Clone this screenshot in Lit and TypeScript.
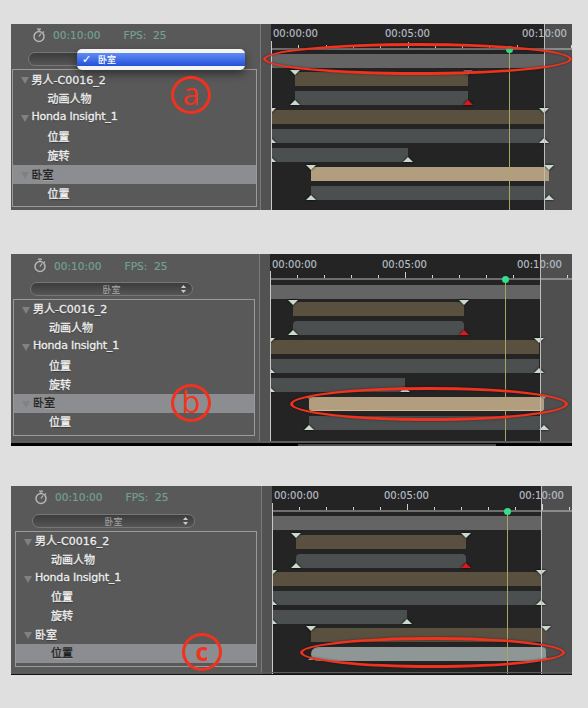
import { LitElement, html, css } from "lit";
import { customElement } from "lit/decorators.js";

type Row = [number, number];
interface Panel {
  height: number; gapBefore: number; sidebar: number; x0: number; treeLeft: number; treeW: number; treeH: number;
  treeTop: number; rowH: number; sel: number; headLeft: number; headH: number; popLeft: number; popW: number; popTop: number;
  rows: Row[]; play: number; end: number; tick: number; rowsTop: number; firstGap: number; gap: number;
  times: number[]; timeTop: number; rulerTop: number; selTrack: number; dimTrack: number; footer: string; round: boolean; menu: boolean;
  ellipse: number[]; circle: number[]; letter: string; letterClass: string;
}

const labels: [string, boolean][] = [
  ["男人-C0016_2", true], ["动画人物", false], ["Honda Insight_1", true], ["位置", false], ["旋转", false], ["卧室", true], ["位置", false],
];

const panels: Panel[] = [
  { height: 186, gapBefore: 24, sidebar: 249, x0: 260, treeLeft: 0.5, treeW: 245, treeH: 138, treeTop: 16, rowH: 19, sel: 5, headLeft: 21, headH: 22, popLeft: 17, popW: 160, popTop: 6,
    rows: [[0, 273], [24, 197], [24, 197], [0, 273], [0, 273], [0, 137], [40, 278], [40, 278]], play: 238, end: 273, tick: 27.3, rowsTop: 30, firstGap: 4, gap: 5,
    times: [2, 114, 251], timeTop: 4, rulerTop: 24, selTrack: 6, dimTrack: -1, footer: "", round: false, menu: true,
    ellipse: [252, 19, 309, 32], circle: [160, 52, 40, 38], letter: "a", letterClass: "thin" },
  { height: 192, gapBefore: 44, sidebar: 248, x0: 259, treeLeft: 2, treeW: 242, treeH: 137, treeTop: 16, rowH: 18.8, sel: 5, headLeft: 22, headH: 23, popLeft: 19, popW: 163, popTop: 6,
    rows: [[0, 270], [23, 194], [23, 194], [0, 269], [0, 269], [0, 135], [39, 274], [39, 274]], play: 235, end: 270, tick: 27, rowsTop: 31, firstGap: 3, gap: 5,
    times: [2, 112, 247], timeTop: 5, rulerTop: 24, selTrack: 6, dimTrack: 6, footer: "bf", round: true, menu: false,
    ellipse: [279, 133, 278, 34], circle: [160, 130, 40, 38], letter: "b", letterClass: "thin" },
  { height: 189, gapBefore: 40, sidebar: 250, x0: 261, treeLeft: 4, treeW: 242, treeH: 136, treeTop: 16, rowH: 18.7, sel: 6, headLeft: 23, headH: 22, popLeft: 21, popW: 163, popTop: 6,
    rows: [[0, 269], [24, 194], [24, 194], [0, 269], [0, 269], [0, 135], [39, 274], [39, 274]], play: 235, end: 269, tick: 27, rowsTop: 30, firstGap: 5, gap: 4.7,
    times: [2, 112, 247], timeTop: 4, rulerTop: 24, selTrack: 7, dimTrack: 7, footer: "cf", round: true, menu: false,
    ellipse: [289, 151, 265, 31], circle: [171, 147, 40, 38], letter: "c", letterClass: "heavy" },
];

@customElement("app-root")
export class AppRoot extends LitElement {
  static styles = css`
    :host { display: block; width: 588px; height: 708px; background: #dfdfdf; overflow: hidden; font-family: "DejaVu Sans", "Noto Sans CJK SC", sans-serif; }
    .panel { position: relative; margin-left: 11px; width: 561px; display: flex; background: #595959; box-sizing: border-box; }
    .side { flex: none; display: flex; flex-direction: column; }
    .head { display: flex; align-items: center; gap: 7px; font-size: 10.6px; color: #72a091; -webkit-text-stroke: .2px #72a091; }
    .head svg { flex: none; }
    .fps { margin-left: 16px; white-space: pre; }
    .popup { height: 14px; box-sizing: border-box; border: 1px solid #777; border-radius: 7px; background: linear-gradient(#3c3c3c, #555); display: flex; align-items: center; justify-content: center; font-size: 9px; color: #aaa; position: relative; }
    .updown { position: absolute; right: 6px; top: 1px; }
    .tree { box-sizing: border-box; border: 1px solid #9a9a9a; overflow: hidden; }
    .row { display: flex; align-items: center; box-sizing: border-box; padding-bottom: 2px; font-size: 11px; color: #efefef; -webkit-text-stroke: .3px #efefef; text-shadow: 0 1px 1px #333; white-space: nowrap; }
    .row.sel { background: #8b8d90; color: #1e1e1e; -webkit-text-stroke: .3px #1e1e1e; text-shadow: 0 1px 0 #aaa; }
    .row .tri { width: 0; height: 0; margin: 4px 3px 0 8px; border-left: 4.5px solid transparent; border-right: 4.5px solid transparent; border-top: 7px solid #818181; }
    .row.child { padding-left: 35px; }
    .latin { letter-spacing: -.2px; }
    .strip { flex: none; width: 11px; background: #525252; border-left: 1px solid #7a7a7a; box-sizing: border-box; }
    .tl { position: relative; flex: 1; background: #242424; overflow: hidden; }
    .stamp { position: absolute; font-size: 10px; color: #b7bfc7; -webkit-text-stroke: .15px #b7bfc7; white-space: nowrap; z-index: 3; }
    .ruler { position: absolute; left: 0; right: 0; height: 2px; background: #6e6e6e; }
    .tick { position: absolute; bottom: 2px; width: 1px; height: 3px; background: #c9d0d0; }
    .tick.major { height: 6px; }
    .tracks { display: flex; flex-direction: column; }
    .bar { position: relative; z-index: 2; height: 14px; flex: none; box-sizing: border-box; }
    .b0 { background: #646464; }
    .b1, .b3, .b6 { background: #5a5040; }
    .b2, .b4, .b5, .b7 { background: #4b4f4f; }
    .rnd { border-radius: 4px 4px 0 0; }
    .tan { background: #b29e7e; }
    .selTan { background: #b29e7e; border-bottom: 1px solid #cdbb9c; border-radius: 3px; }
    .selGrey { background: #8f9696; border-radius: 7px 4px 4px 7px; }
    .mk { position: absolute; width: 0; height: 0; margin-left: -5px; border-left: 5px solid transparent; border-right: 5px solid transparent; filter: drop-shadow(0 0 1px #000); }
    .mk.down { top: -2px; border-top: 5px solid #c9dccb; }
    .mk.up { bottom: 0; border-bottom: 5px solid #c9dccb; }
    .mk.red { border-bottom-color: #e5141a; }
    .mk.grey { border-top-color: #777; }
    .mk.dim { transform: scale(.6); opacity: .7; }
    .over { position: absolute; top: 0; bottom: 0; right: 0; background: rgba(255,255,255,.2); z-index: 1; }
    .endline { position: absolute; top: 0; bottom: 0; width: 1px; background: #bdbdbd; z-index: 3; }
    .startline { position: absolute; left: 0; bottom: 0; width: 1px; background: #c8c8c8; z-index: 3; }
    .play { position: absolute; bottom: 0; width: 1px; background: #a8a464; z-index: 3; }
    .dot { position: absolute; width: 7px; height: 7px; border-radius: 50%; background: #34e08c; z-index: 4; }
    .foot { position: absolute; left: 0; right: 0; bottom: 0; background: #000; z-index: 4; box-shadow: 0 -2px 0 #5c5c5c; }
    .foot.bf { height: 3px; }
    .foot.bf i { position: absolute; left: 287px; width: 198px; top: 1px; height: 2px; background: #4a4a4a; }
    .foot.cf { height: 1px; background: #111; }
    .ellipse { position: absolute; box-sizing: border-box; border: 3px solid #f0321e; border-radius: 50%; z-index: 6; filter: drop-shadow(0 0 1px rgba(0,0,0,.4)); }
    .circle { position: absolute; box-sizing: border-box; border: 3px solid #f0321e; border-radius: 50%; z-index: 6; display: flex; align-items: center; justify-content: center; color: #f0341e; font-family: "Open Sans", sans-serif; line-height: 1; }
    .thin { font-size: 31px; padding-bottom: 4px; }
    .heavy { font-size: 25px; font-weight: 700; padding-bottom: 2px; }
    .menu { position: absolute; left: 66px; top: 25px; width: 168px; height: 21px; padding-top: 4px; box-sizing: border-box; background: #f4f4f4; border-radius: 5px; box-shadow: 0 4px 8px rgba(0,0,0,.45); z-index: 5; }
    .menu div { height: 13px; background: linear-gradient(#5f8df3, #2450da); color: #fff; font-size: 9px; -webkit-text-stroke: .2px #fff; display: flex; align-items: center; padding-left: 5px; }
    .menu b { width: 16px; font-size: 11px; }
  `;

  private clock() {
    return html`<svg width="14" height="15" viewBox="0 0 14 15" fill="none" stroke="#b5b5b5"><circle cx="7" cy="8.5" r="5" stroke-width="1.5"/><path d="M5 1.2h4M7 1.5v2M7 8.5l2-3" stroke-width="1.3"/><path d="M11 3.5l1 1" stroke-width="1.2"/></svg>`;
  }

  private marks(p: Panel, i: number, r: Row) {
    if (i === 0) return "";
    const down = i === 1 || i === 3 || i === 6;
    const w = r[1] - r[0];
    const dim = p.dimTrack === i ? "dim" : "";
    const endCls = i === 2 ? "red" : i === 1 && p.menu ? "grey" : "";
    const dir = down ? "down" : "up";
    return html`<span class="mk ${dir} ${dim}" style="left:0"></span><span class="mk ${dir} ${dim} ${endCls}" style="left:${w}px"></span>`;
  }

  private barClass(p: Panel, i: number) {
    if (i === p.selTrack && p.dimTrack === 6) return "selTan";
    if (i === p.selTrack && i === 7) return "selGrey";
    if (i === p.selTrack) return "tan";
    return `b${i} ${p.round && (i === 1 || i === 2 || i === 6) ? "rnd" : ""}`;
  }

  private panel(p: Panel) {
    const ticks = Array.from({ length: 12 }, (_, k) => k);
    return html`<div class="panel" style="height:${p.height}px;margin-top:${p.gapBefore}px">
      <div class="side" style="width:${p.sidebar}px">
        <div class="head" style="height:${p.headH}px;padding-left:${p.headLeft}px">${this.clock()}<span>00:10:00</span><span class="fps">FPS:  25</span></div>
        <div class="popup" style="margin-left:${p.popLeft}px;width:${p.popW}px;margin-top:${p.popTop - (p.headH - 22)}px">${p.menu ? "" : html`<span>卧室</span><svg class="updown" width="5" height="10" viewBox="0 0 5 10" fill="#ccc"><path d="M2.5 1L5 4H0zM2.5 9L0 6h5z"/></svg>`}</div>
        <div class="tree" style="margin-left:${p.treeLeft}px;width:${p.treeW}px;height:${p.treeH}px;margin-top:${p.treeTop - 14 - p.popTop + 7}px">
          ${labels.map(([t, top], i) => html`<div class="row ${top ? "" : "child"} ${i === p.sel ? "sel" : ""}" style="height:${p.rowH}px">${top ? html`<span class="tri"></span>` : ""}<span class="${t.startsWith("Honda") ? "latin" : ""}">${t}</span></div>`)}
        </div>
      </div>
      <div class="strip"></div>
      <div class="tl">
        ${["00:00:00", "00:05:00", "00:10:00"].map((t, i) => html`<span class="stamp" style="left:${p.times[i]}px;top:${p.timeTop}px">${t}</span>`)}
        <div class="ruler" style="top:${p.rulerTop}px">${ticks.map((k) => html`<span class="tick ${k === 5 || k === 10 ? "major" : ""}" style="left:${Math.round(k * p.tick)}px"></span>`)}</div>
        <div class="tracks" style="padding-top:${p.rowsTop}px">
          ${p.rows.map((r, i) => html`<div class="bar ${this.barClass(p, i)}" style="margin-left:${r[0]}px;width:${r[1] - r[0]}px;margin-top:${i === 0 ? 0 : i === 1 ? p.firstGap : p.gap}px">${this.marks(p, i, r)}</div>`)}
        </div>
        <div class="startline" style="top:${p.rulerTop - 7}px"></div>
        <div class="play" style="left:${p.play}px;top:${p.rulerTop}px"></div>
        <div class="dot" style="left:${p.play - 3}px;top:${p.rulerTop - 2}px"></div>
        <div class="over" style="left:${p.end}px"></div>
        <div class="endline" style="left:${p.end}px"></div>
      </div>
      ${p.footer ? html`<div class="foot ${p.footer}">${p.footer === "bf" ? html`<i></i>` : ""}</div>` : ""}
      ${p.menu ? html`<div class="menu"><div><b>✓</b><span>卧室</span></div></div>` : ""}
      <div class="ellipse" style="left:${p.ellipse[0]}px;top:${p.ellipse[1]}px;width:${p.ellipse[2]}px;height:${p.ellipse[3]}px"></div>
      <div class="circle ${p.letterClass}" style="left:${p.circle[0]}px;top:${p.circle[1]}px;width:${p.circle[2]}px;height:${p.circle[3]}px">${p.letter}</div>
    </div>`;
  }

  render() {
    return html`${panels.map((p) => this.panel(p))}`;
  }
}
